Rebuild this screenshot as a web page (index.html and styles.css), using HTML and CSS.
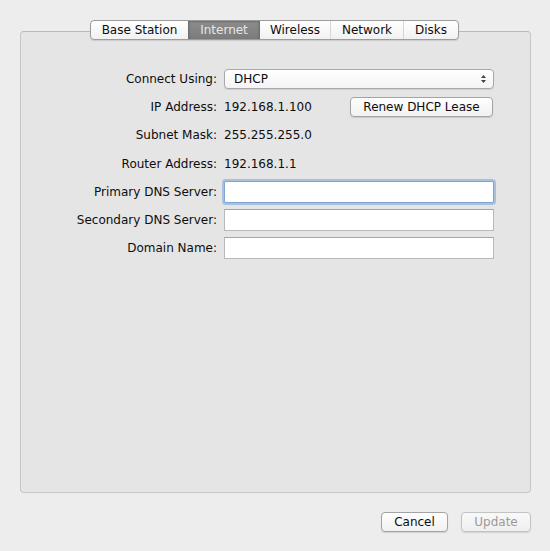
FILE: index.html
```html
<!DOCTYPE html>
<html>
<head>
<meta charset="utf-8">
<link rel="stylesheet" href="styles.css">
</head>
<body>
<div class="window">
  <div class="tabs">
    <div class="tab t1">Base Station</div>
    <div class="tab t2 active">Internet</div>
    <div class="tab t3">Wireless</div>
    <div class="tab t4">Network</div>
    <div class="tab t5">Disks</div>
  </div>
  <div class="panel">
    <div class="form">
      <div class="label">Connect Using:</div>
      <div class="cell">
        <div class="select">
          <span>DHCP</span>
          <svg class="arrows" width="7" height="10" viewBox="0 0 7 10"><path d="M3.5 1 L6 4 L1 4 Z M3.5 9 L6 6 L1 6 Z" fill="#444"/></svg>
        </div>
      </div>
      <div class="label">IP Address:</div>
      <div class="cell split">
        <span class="value">192.168.1.100</span>
        <div class="btn renew">Renew DHCP Lease</div>
      </div>
      <div class="label">Subnet Mask:</div>
      <div class="cell"><span class="value">255.255.255.0</span></div>
      <div class="label">Router Address:</div>
      <div class="cell"><span class="value">192.168.1.1</span></div>
      <div class="label">Primary DNS Server:</div>
      <div class="cell"><div class="field focused"></div></div>
      <div class="label">Secondary DNS Server:</div>
      <div class="cell"><div class="field"></div></div>
      <div class="label">Domain Name:</div>
      <div class="cell"><div class="field"></div></div>
    </div>
  </div>
  <div class="actions">
    <div class="btn cancel">Cancel</div>
    <div class="btn update disabled">Update</div>
  </div>
</div>
</body>
</html>
```
FILE: styles.css
```css
* { box-sizing: border-box; }
html, body {
  margin: 0;
  padding: 0;
  background: #ededed;
}
body {
  width: 550px;
  height: 551px;
  font-family: "DejaVu Sans", "Liberation Sans", sans-serif;
  font-size: 12px;
  color: #0d0d0d;
  overflow: hidden;
}
.window {
  padding: 20px 19px 0 20px;
}
.tabs {
  position: relative;
  z-index: 2;
  display: flex;
  margin-left: 70px;
  width: 369px;
  height: 20px;
  border: 1px solid #9c9c9c;
  border-radius: 4px;
  background: linear-gradient(#ffffff, #f1f1f1);
  box-shadow: 0 1px 1px rgba(0,0,0,0.12);
  overflow: hidden;
}
.tab {
  display: flex;
  align-items: center;
  justify-content: center;
  height: 100%;
  border-left: 1px solid #d6d6d6;
  color: #0d0d0d;
}
.tab.t1 { width: 97px; border-left: none; }
.tab.t2 { width: 71px; }
.tab.t3 { width: 71px; }
.tab.t4 { width: 73px; }
.tab.t5 { flex: 1; }
.tab.active {
  background: linear-gradient(#8d8d8d, #7b7b7b);
  color: #e6e6e6;
  border-left: 1px solid #6e6e6e;
  box-shadow: inset 0 1px 2px rgba(0,0,0,0.25);
}
.tab.active + .tab { border-left: 1px solid #6e6e6e; }
.panel {
  margin-top: -9px;
  width: 511px;
  height: 462px;
  background: #e5e5e5;
  border: 1px solid #c6c6c6;
  border-top-color: #b9b9b9;
  border-radius: 4px;
  padding-top: 36px;
}
.form {
  display: grid;
  grid-template-columns: 196px 270px;
  grid-template-rows: 22px 22px 22px 23px 22px 22px 22px;
  column-gap: 7px;
  row-gap: 6px;
}
.label {
  display: flex;
  align-items: center;
  justify-content: flex-end;
  white-space: nowrap;
}
.cell {
  display: flex;
  align-items: center;
}
.cell.split {
  justify-content: space-between;
  padding-right: 1px;
}
.select {
  display: flex;
  align-items: center;
  justify-content: space-between;
  width: 270px;
  height: 20px;
  padding: 0 6px 0 9px;
  background: linear-gradient(#ffffff, #f4f4f4);
  border: 1px solid #a8a8a8;
  border-radius: 4px;
  box-shadow: 0 1px 1px rgba(0,0,0,0.1);
}
.btn {
  display: flex;
  align-items: center;
  justify-content: center;
  height: 20px;
  background: linear-gradient(#ffffff, #f1f1f1);
  border: 1px solid #a3a3a3;
  border-radius: 4px;
  box-shadow: 0 1px 1px rgba(0,0,0,0.12);
  color: #0d0d0d;
  white-space: nowrap;
}
.btn.renew { width: 143px; }
.field {
  width: 270px;
  height: 22px;
  background: #ffffff;
  border: 1px solid #b9b9b9;
  border-top-color: #a5a5a5;
}
.field.focused {
  border: 1px solid #7fa6d6;
  box-shadow: 0 0 0 2px rgba(118,160,215,0.55);
  border-radius: 2px;
}
.actions {
  display: flex;
  justify-content: flex-end;
  gap: 13px;
  margin-top: 19px;
  width: 511px;
}
.btn.cancel { width: 67px; }
.btn.update { width: 70px; }
.btn.disabled {
  color: #9a9a9a;
  border-color: #c3c3c3;
  background: linear-gradient(#f8f8f8, #efefef);
}
```
